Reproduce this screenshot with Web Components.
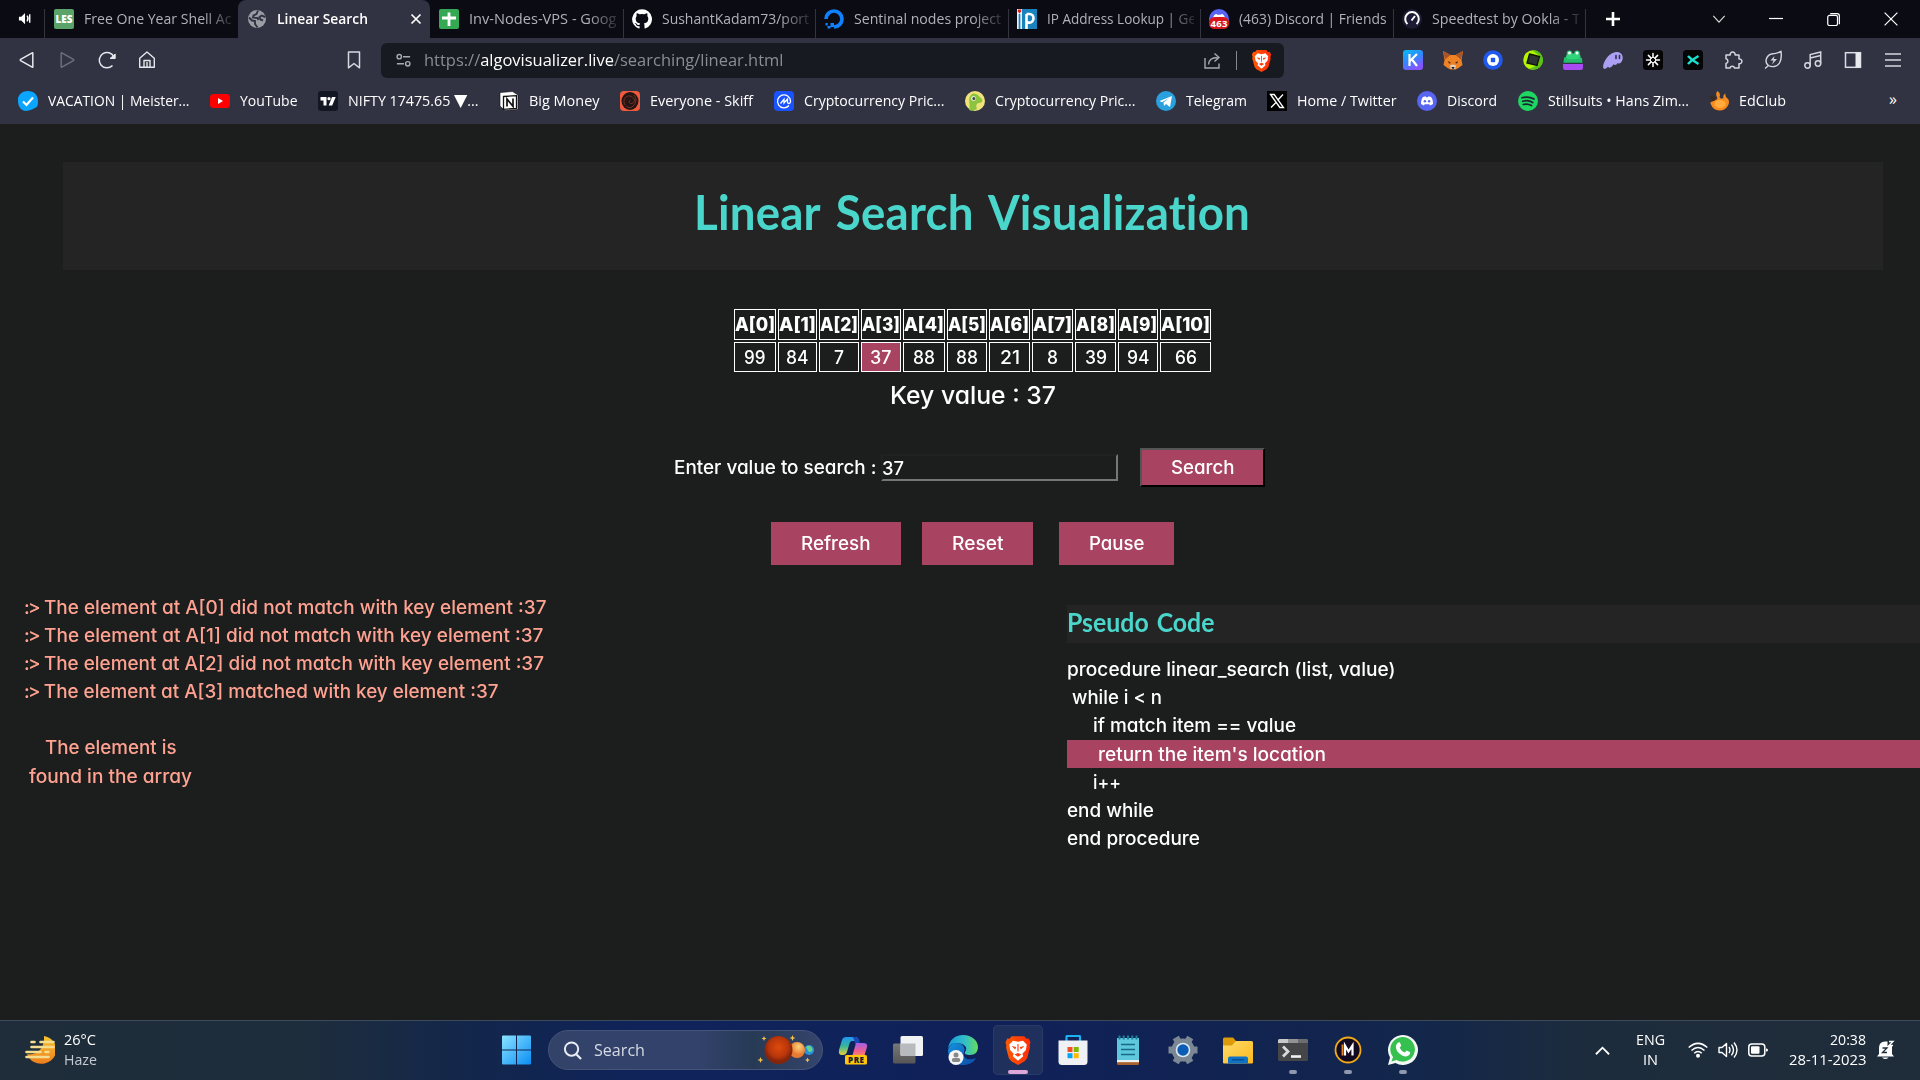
<!DOCTYPE html>
<html lang="en">
<head>
<meta charset="utf-8">
<title>Linear Search</title>
<style>
html,body{margin:0;padding:0;background:#1c1e1d;overflow:hidden}
body{font-family:"Open Sans","Noto Sans",sans-serif;width:1920px;height:1080px}
</style>
</head>
<body>
<desktop-screen></desktop-screen>
<script>
const ICONS = {
audio:[16,`<path d="M1 6h2.500l4-4v12l-4-4H1z" fill="#fff"/><path d="M9.700 5q2 3 0 6M12.500 3.500v9" fill="none" stroke="#fff" stroke-width="1.500"/>`],
les:[20,`<rect width="20" height="20" rx="2" fill="#5aa469"/><text x="10" y="13.800" font-family="Open Sans" font-weight="800" font-size="10" fill="#fff" text-anchor="middle" textLength="17" lengthAdjust="spacingAndGlyphs">LES</text>`],
globe:[20,`<circle cx="10" cy="10" r="9" fill="#9b9da5"/><path d="M11 1.500 9.500 5l-3 1.500-.5 2 4.500.5 1 2M18.500 8l-4-1.500-2 1.500 1 2.500 2.500 1M2 8.500l3 3 3 .5v3l2.500 3.500" fill="none" stroke="#313343" stroke-width="1.900"/>`],
sheets:[20,`<rect width="20" height="20" rx="2" fill="#34a853"/><path d="M10 3.500v13.500M3 9h14" stroke="#fff" stroke-width="2.800"/>`],
github:[20,`<path d="M10 .3a9.900 9.900 0 0 0-3.100 19.300c.5.1.7-.2.700-.5v-1.900c-2.800.6-3.400-1.200-3.400-1.200-.4-1.100-1.100-1.400-1.100-1.400-.9-.6.1-.6.1-.6 1 .1 1.500 1 1.500 1 .9 1.500 2.300 1.100 2.900.8.100-.6.300-1.100.6-1.300-2.200-.3-4.500-1.100-4.500-4.900 0-1.100.4-2 1-2.700-.1-.2-.4-1.200.1-2.600 0 0 .8-.3 2.700 1a9.500 9.500 0 0 1 5 0c1.900-1.300 2.700-1 2.700-1 .5 1.400.2 2.400.1 2.600.6.7 1 1.600 1 2.700 0 3.800-2.300 4.700-4.500 4.900.4.300.7.900.7 1.800v2.800c0 .3.200.6.700.5A9.900 9.900 0 0 0 10 .3z" fill="#fff"/>`],
docean:[20,`<path d="M10 18a8 8 0 1 0-8-8" fill="none" stroke="#0f80ff" stroke-width="3.700"/><path d="M6.500 14H10v4H6.500zM3.500 17h3v2.500h-3zM1.500 14h2.200v2.500H1.500z" fill="#0f80ff"/>`],
ip:[20,`<rect width="20" height="20" fill="#1a83bd"/><path d="M0 0h5v20H0z" fill="#e9f4fa"/><path d="M9.500 20V5M9.500 5h3a4 4.300 0 0 1 0 8.600h-3" fill="none" stroke="#fff" stroke-width="2.600"/><path d="M2.500 5v15" stroke="#1a83bd" stroke-width="1.700"/><path d="M.8.500h3.400v2L2.500 4.500.8 2.500z" fill="#d22"/>`],
dc463:[20,`<circle cx="10" cy="10" r="10" fill="#5865f2"/><path d="M4 9q1-4 3.500-4l1 .7h3l1-.7Q15 5 16 9z" fill="#fff"/><rect y="8" width="20" height="12" rx="5.500" fill="#d8171c"/><text x="10" y="17.500" font-family="Open Sans" font-weight="700" font-size="9.500" fill="#fff" text-anchor="middle" textLength="17">463</text>`],
speed:[20,`<circle cx="10" cy="10" r="10" fill="#1b1b33"/><path d="M5.500 15a6.800 6.800 0 1 1 9 0M9.500 11.500 13 7" fill="none" stroke="#fff" stroke-width="2"/>`],
close:[12,`<path d="M1.500 1.500l9 9m0-9-9 9" stroke="#fff" stroke-width="1.700"/>`],
plus:[16,`<path d="M8 1v14M1 8h14" stroke="#fff" stroke-width="2.600"/>`],
chev:[16,`<path d="M1.500 4.500 8 11.500l6.500-7" fill="none" stroke="#ddd" stroke-width="1.300"/>`],
min:[14,`<path d="M0 6.500h14" stroke="#fff" stroke-width="1.200"/>`],
max:[14,`<rect x=".8" y="2.500" width="10.500" height="11" rx="2" fill="none" stroke="#fff" stroke-width="1.300"/><path d="M3.500.7h7.500a2.300 2.300 0 0 1 2.300 2.300v9" fill="none" stroke="#fff" stroke-width="1.300"/>`],
winx:[14,`<path d="M.6.600l12.800 12.800m0-12.800L.6 13.400" stroke="#fff" stroke-width="1.200"/>`],
back:[20,`<path d="M15.800 3v14q0 .6-.6.200L3.600 10.600q-.7-.6 0-1.200L15.200 2.800q.6-.4.6.2z" fill="none" stroke="#e6e7ec" stroke-width="1.500"/>`],
fwd:[20,`<path d="M4.200 3v14q0 .6.6.200l11.600-6.600q.7-.6 0-1.200L4.800 2.800q-.6-.4-.6.2z" fill="none" stroke="#6b6d7b" stroke-width="1.500"/>`],
reload:[20,`<path d="M15.500 15.500A7.700 7.700 0 1 1 17 7" fill="none" stroke="#e6e7ec" stroke-width="1.500"/><path d="M13 8.500h5.200V4z" fill="#e6e7ec" stroke="#e6e7ec" stroke-linejoin="round"/>`],
home:[20,`<path d="M2.700 8.200 10 2l7.300 6.200v9.100H2.700zM7 17V10.500h6V17M10 12v5" fill="none" stroke="#e6e7ec" stroke-width="1.400" stroke-linejoin="round"/>`],
mark:[20,`<path d="M4.500 2h11v15.800L10 13.500l-5.500 4.300z" fill="none" stroke="#d7d8df" stroke-width="1.500" stroke-linejoin="round"/>`],
site:[18,`<circle cx="4.500" cy="5" r="2.300" fill="none" stroke="#a9abb3" stroke-width="1.500"/><circle cx="13.500" cy="12.500" r="2.300" fill="none" stroke="#a9abb3" stroke-width="1.500"/><path d="M8.500 5H16M2 12.500h7.500" stroke="#a9abb3" stroke-width="1.500"/>`],
share:[20,`<path d="M3 7v10h14v-4.500" fill="none" stroke="#a7a9b0" stroke-width="1.400"/><path d="M6.500 13.500q.5-7 9-7M12.500 2.500 17 6.500l-4.500 4" fill="none" stroke="#a7a9b0" stroke-width="1.400"/>`],
brave:[24,`<path d="M7 1h10l1.800 2 1.700-.2 1.500 3-.7 2.500.3 1.700-2.300 8.500-2 2.500L12 24l-5.300-3-2-2.500L2.400 10l.3-1.700L2 5.800l1.500-3 1.700.2z" fill="url(#bg)"/><defs><linearGradient id="bg"><stop stop-color="#ff5a00"/><stop offset="1" stop-color="#ff2b0a"/></linearGradient></defs><path d="M8 4.500 12 5.400l4-.9L19 7.500l-.7 4.500-2.800 3 .7 2L12 20.500 7.800 17l.7-2-2.800-3L5 7.500z" fill="#fff"/><path d="m6.800 8.800 3.700.7-.7 2zm10.400 0-3.700.7.7 2zM9.200 15.600 12 14.300l2.800 1.300L12 17.400z" fill="#ff3d05"/><path d="M12 7.200v6" stroke="#ff3d05" stroke-width=".9"/>`],
kep:[20,`<defs><linearGradient id="kg" x2=".5" y2="1"><stop stop-color="#05bdf2"/><stop offset=".5" stop-color="#2c8cff"/><stop offset="1" stop-color="#8554ff"/></linearGradient></defs><rect width="20" height="20" rx="3" fill="url(#kg)"/><path d="M6.500 4v12M14 4l-7 7M9 9.500l5 6.500" stroke="#fff" stroke-width="2.200" fill="none"/>`],
fox:[20,`<path d="M0 1 7.500 5h5L20 1l-1.500 9 1 5-4 3-3 1.500h-5L4.500 18l-4-3 1-5z" fill="#ee8225"/><path d="M0 1l7.500 4L2 9.500zM20 1l-7.500 4L18 9.500z" fill="#a85428"/><path d="M5 11l3 2-2 .5zM15 11l-3 2 2 .5z" fill="#222"/><path d="M7 15.500 10 14.500l3 1-.7 3.500H7.700z" fill="#ddd0bf"/><path d="M8.500 17h3l-.5 1.700H9z" fill="#222"/>`],
coinb:[20,`<circle cx="10" cy="10" r="9.800" fill="#2159ec"/><circle cx="10" cy="10" r="6" fill="#fff"/><rect x="7.800" y="7.800" width="4.400" height="4.400" rx=".6" fill="#2159ec"/>`],
lime:[20,`<circle cx="10" cy="10" r="9.800" fill="#b6f400"/><path d="M9 .3A9.800 9.800 0 0 1 17 17Q12 21 6 19l9-4 2-9z" fill="#58c11a"/><path d="M6.500 4 16.500 6.500 14 15.500 4 13z" fill="#2c3236" stroke="#0e1800" stroke-width="1.400"/>`],
frog:[20,`<circle cx="6.500" cy="3.300" r="2.800" fill="#28c76f"/><circle cx="14" cy="3.300" r="2.800" fill="#28c76f"/><rect x="3" y="3.500" width="14.500" height="7" rx="3.500" fill="#2fd57a"/><path d="M1 8q1-2 2.500 0t3 1h7q2 0 3-1t2.500 0l.5 4.800H.5z" fill="#25bd6c"/><circle cx="6.500" cy="2.900" r="1.500" fill="#fff"/><circle cx="14" cy="2.900" r="1.500" fill="#fff"/><path d="M0 14h20v3.500q0 2.500-2 2.500H2q-2 0-2-2.500z" fill="#a94af3"/>`],
ghost:[20,`<path d="M.3 18C-1 15 4 3.500 12 2.200c6-.9 8.500 3 7.500 7.300-.8 3.500-3.500 5-5 3.500-.5 2-3 2.500-4 1.300C8.500 18 5.500 18.500 5 16.500 3.500 19 1 19.500.300 18z" fill="#ab9ff2"/><path d="M13 5.500v3M16.500 5.500v3" stroke="#312c55" stroke-width="1.600" stroke-linecap="round"/>`],
flake:[20,`<rect width="20" height="20" rx="3.500" fill="#050505"/><path d="M10 3.500v3.800M10 12.700v3.800M3.500 10h3.800M12.700 10h3.800M5.400 5.400l2.700 2.700M11.900 11.900l2.700 2.700M14.600 5.400l-2.700 2.700M8.100 11.900l-2.700 2.700" stroke="#fff" stroke-width="1.500" stroke-linecap="round"/><circle cx="10" cy="10" r="2.700" fill="none" stroke="#fff" stroke-width=".9"/>`],
xk:[20,`<rect width="20" height="20" rx="3.500" fill="#050505"/><path d="M5 6q4 4.500 10.500 8M15.500 6Q9 9.500 5 14" fill="none" stroke="#19e3cf" stroke-width="2.500"/>`],
puzzle:[20,`<path d="M3 5h4.200a2.500 2.500 0 1 1 4.900 0H16v4a2.400 2.400 0 1 1 0 4.700V18h-4.500a2.300 2.300 0 0 0-4.500 0H3v-4.500a2.400 2.400 0 0 0 0-4.700z" fill="none" stroke="#d5d6dd" stroke-width="1.500" stroke-linejoin="round"/>`],
leaf:[20,`<path d="M18 1.500Q19 9 16.500 13c-2.500 4-7.500 4.500-11 2.500C.500 12 4 5 8.500 4q5-.5 9.500-2.500zM5.500 15.500 2 18.500" fill="none" stroke="#d5d6dd" stroke-width="1.400"/><path d="m11.500 6-4 4.500h3L9 14.500l5-5.500h-3.200z" fill="#d5d6dd"/>`],
music:[20,`<circle cx="4.500" cy="15.500" r="2.700" fill="none" stroke="#d5d6dd" stroke-width="1.500"/><circle cx="15" cy="13.500" r="2.700" fill="none" stroke="#d5d6dd" stroke-width="1.500"/><path d="M7.200 15.500V4.500L17.700 2v11.500M7.200 8 17.700 5.500" fill="none" stroke="#d5d6dd" stroke-width="1.500"/>`],
panel:[20,`<rect x="2.500" y="2.700" width="15" height="14.600" fill="none" stroke="#dcdde3" stroke-width="1.500"/><path d="M12.500 2.500h5v15h-5z" fill="#e9eaee"/>`],
menu:[20,`<path d="M2 4h16M2 10h16M2 16h16" stroke="#d5d6dd" stroke-width="1.600"/>`],
meister:[20,`<path d="M10 0C16 0 20 4 20 10s-1 6-5 8-9 3-12 0-3-7-3-10 3-8 10-8z" fill="#0aa5ff"/><path d="m5 10.500 3.500 3.500L15 6.500" fill="none" stroke="#fff" stroke-width="2.200"/>`],
youtube:[20,`<rect y="3" width="20" height="14" rx="3.500" fill="#f00"/><path d="m8 7 5 3-5 3z" fill="#fff"/>`],
tv:[20,`<rect width="20" height="20" rx="3" fill="#131722"/><path d="M2.500 6h6v8.500H5.500v-5h-3z" fill="#fff"/><circle cx="11" cy="7.700" r="1.600" fill="#fff"/><path d="M14 6h3.700l-3.500 8.500h-3.500z" fill="#fff"/>`],
notion:[20,`<path d="M1 1.500 13.500.500 19 4v14.500l-13.500 1L1 15z" fill="#fff" stroke="#111" stroke-width=".6"/><path d="M4.500 5.500 17.500 4.700v12.800l-13 .8z" fill="#fff" stroke="#111" stroke-width="1.300"/><path d="M8 15.500V8l6 7.300V7.500" fill="none" stroke="#111" stroke-width="1.700"/>`],
skiff:[20,`<rect width="20" height="20" rx="4" fill="#ef5a3c"/><ellipse cx="10" cy="10" rx="8.500" ry="9" fill="#241514"/><path d="M5 14C2 9 6 4 10 5s6 5 3 7-5-1-3-3M14 4q4 5 0 10t-8 1" fill="none" stroke="#7a3326" stroke-width=".9"/>`],
cmc:[20,`<rect width="20" height="20" rx="4" fill="#1a52ff"/><path d="M15 14.500A6.500 6.500 0 1 1 16.500 10q0 2.700-1.700 2.500T13.500 9.500V8L10 12V8.300L6.500 12.500" fill="none" stroke="#fff" stroke-width="1.300"/>`],
gecko:[20,`<circle cx="10" cy="10" r="10" fill="#f2e27c"/><path d="M4 19C6 14 2 8 6 4s8 1 10 3 2 5-2 5q-4 .5-2 6-5 3-8 1z" fill="#8bc53f"/><circle cx="8.500" cy="7.500" r="2.300" fill="#fff"/><circle cx="8.800" cy="7.500" r="1.500" fill="#444"/>`],
tg:[20,`<circle cx="10" cy="10" r="10" fill="#2aa1de"/><path d="m3.500 10 12.500-5-2 11-4-3-2 2-.5-3.500 5.500-4.500-7 4.200z" fill="#fff"/>`],
xx:[20,`<rect width="20" height="20" fill="#000"/><path d="M3.500 3.500h3.700l9.300 13h-3.700zM16 3.500l-5.500 6M9 11.500l-5 5" fill="none" stroke="#fff" stroke-width="1.300"/>`],
discord:[20,`<circle cx="10" cy="10" r="10" fill="#5865f2"/><path d="M4 13q0-5 2-7l2.500-.7.5 1h2l.5-1L14 6q2 2 2 7l-2.800 1.500-1-1.300H7.800l-1 1.300z" fill="#fff"/><circle cx="7.900" cy="10.300" r="1.200" fill="#5865f2"/><circle cx="12.100" cy="10.300" r="1.200" fill="#5865f2"/>`],
spotify:[20,`<circle cx="10" cy="10" r="10" fill="#1ed760"/><path d="M4 6.800q6.500-1.800 12 1.200M4.700 10.300q5.500-1.600 10 1.200M5.300 13.500q4.500-1.200 8.200 1" fill="none" stroke="#1b2230" stroke-width="1.700" stroke-linecap="round"/>`],
ed:[20,`<path d="M8.500 0q3.500 2 2 6 1 2.500 4 1-1-3 2-4.500-.5 3 1.500 4.500 3 2 1.500 6.500Q17 19.500 10.500 19.500T1.500 12.500Q1.500 9.500 5 9q5 0 2.500-4Q6.500 2 8.500 0z" fill="#f68b1f"/><path d="M0 5.500q4-1.500 5.500.5t.5 3.500L2 11Q3 8 0 5.500z" fill="#3b2a20"/><ellipse cx="11" cy="13" rx="5.500" ry="4" fill="#ffac3d"/>`],
haze:[30,`<defs><linearGradient id="hz" x2="0" y2="1"><stop stop-color="#f7c52d"/><stop offset="1" stop-color="#ee7d1e"/></linearGradient></defs><path d="M19 1a15 14 0 1 1-17 18c9 2 18-5 17-18z" fill="url(#hz)"/><path d="M6.500 7h3M15.500 7h13M6.500 12h22M1.500 17h14M20.500 17h3M1.500 22h22" stroke="#f4dd8e" stroke-width="2.600" stroke-linecap="round"/>`],
win:[30,`<defs><linearGradient id="wg" x2="1" y2="1"><stop stop-color="#8be3ff"/><stop offset="1" stop-color="#0a8ef4"/></linearGradient></defs><path d="M0 1.500Q0 .5 1 .5h13v14H0zM15 .5h13q1 0 1 1v13H15zM0 15.500h14v14H1q-1 0-1-1zM15 15.500h14v13q0 1-1 1H15z" fill="url(#wg)"/>`],
search:[20,`<circle cx="9" cy="8.500" r="7" fill="none" stroke="#e9ecf4" stroke-width="2.100"/><path d="m14 14 5 5" stroke="#e9ecf4" stroke-width="2.300"/>`],
planets:[60,`<defs><radialGradient id="pr" cx=".5" cy=".4"><stop stop-color="#dd4a0e"/><stop offset=".7" stop-color="#b8360a"/><stop offset="1" stop-color="#84240a"/></radialGradient><radialGradient id="po" cx=".6" cy=".3"><stop stop-color="#ffd27a"/><stop offset="1" stop-color="#e77a32"/></radialGradient></defs><circle cx="52" cy="30" r="5" fill="#2894d8"/><path d="M49 27q4-3 6 1t-3 4z" fill="#69d089"/><circle cx="40" cy="30" r="8" fill="url(#po)"/><circle cx="21.500" cy="30" r="14" fill="url(#pr)"/><path d="M7 16l.7 1.800 1.800.7-1.800.7L7 21l-.7-1.800-1.800-.7 1.800-.7zM35.500 15l.8 2.200 2.200.8-2.200.8-.8 2.200-.8-2.200-2.200-.8 2.200-.8zM3.500 37l.8 2.200 2.200.8-2.200.8-.8 2.200-.8-2.200-2.200-.8 2.200-.8zM50.500 37.500l.7 1.800 1.800.7-1.800.7-.7 1.800-.7-1.800-1.800-.7 1.800-.7z" fill="#f5c84c"/>`],
copilot:[30,`<defs><linearGradient id="c1" x2="0" y2="1"><stop stop-color="#2196f3"/><stop offset=".5" stop-color="#36b59b"/><stop offset="1" stop-color="#e6d13a"/></linearGradient><linearGradient id="c2" x2="0" y2="1"><stop stop-color="#a05ee8"/><stop offset=".6" stop-color="#f2608c"/><stop offset="1" stop-color="#f79552"/></linearGradient></defs><path d="M8 2h10q2 0 3 4H14q-2 0-3 4l-2 7q-1 3-4 3H4q-4 0-3-5L4 5q1-3 4-3z" fill="url(#c1)"/><path d="M14 2h4q2 0 3 3l1 4h-5q-1-7-3-7z" fill="#1747b8"/><path d="M18 8h7q5 0 4 4l-3 10H14z" fill="url(#c2)"/><rect x="7" y="20" width="22" height="9.500" rx="1.500" fill="#ffc60a"/><text x="18" y="27.500" font-family="Open Sans" font-weight="800" font-size="8" fill="#16202f" text-anchor="middle" textLength="16">PRE</text>`],
taskview:[30,`<defs><linearGradient id="tg1" x2="0" y2="1"><stop stop-color="#777"/><stop offset="1" stop-color="#565656"/></linearGradient></defs><rect x="0" y="8.500" width="22.500" height="20" rx="1.500" fill="url(#tg1)"/><rect x="7.500" y="1" width="22.500" height="20" rx="1.500" fill="#f1f2f4"/><path d="M7.500 8.500h15V21H9q-1.500 0-1.500-1.500z" fill="#b9babd"/>`],
edge:[30,`<defs><linearGradient id="e1"><stop stop-color="#159bdf"/><stop offset=".6" stop-color="#35c1c4"/><stop offset="1" stop-color="#66dc5a"/></linearGradient><linearGradient id="e2" x2="1" y2="1"><stop stop-color="#1592e0"/><stop offset="1" stop-color="#0b4aa5"/></linearGradient></defs><path d="M0 15Q1 9 8 8c7 0 10 5 8 9-2 7 5 9 12 6-3 6-9 7-13 7C7 30 0 24 0 15z" fill="url(#e2)"/><path d="M0 14C1 5 7 0 15 0c9 0 15 6 15 12 0 5-3 8-8 8-4 0-6-1-5-3 4-5-2-9-8-9C5 8 1 10 0 14z" fill="url(#e1)"/><circle cx="8" cy="22.500" r="7.500" fill="#f4f6f8"/><circle cx="8" cy="20" r="2.500" fill="#888"/><rect x="3.800" y="23" width="8.500" height="4" rx="2" fill="#888"/>`],
store:[30,`<path d="M8.500 6V2q0-1.200 1.200-1.200h11Q22 .8 22 2v4" fill="none" stroke="#1bb1f2" stroke-width="2.200"/><path d="M.5 5.500h29v21q0 3.500-3.500 3.500H4Q.5 30 .5 26.500z" fill="#f0f1f4"/><path d="M9.500 12h5v5h-5z" fill="#f25022"/><path d="M15.700 12h5v5h-5z" fill="#7fba00"/><path d="M9.500 18.200h5v5h-5z" fill="#00a4ef"/><path d="M15.700 18.200h5v5h-5z" fill="#ffb900"/>`],
notepad:[30,`<rect x="4" y="25" width="22" height="5" rx="1.500" fill="#a9612b"/><path d="M4 3h22v24H4z" fill="#5fc8dd"/><path d="M4 25h22v2.200H4z" fill="#eef2f4"/><path d="M8 9.500h14M8 14.500h14M8 19.500h14" stroke="#176a83" stroke-width="1.700"/><path d="M6.500.5v4M10.700.5v4M15 .5v4M19.300.5v4M23.500.5v4" stroke="#19819b" stroke-width="2"/>`],
gear:[30,`<g fill="#7b8894"><circle cx="15" cy="15" r="11.500"/><path d="M11.500.5h7v29h-7z" transform="rotate(30 15 15)"/><path d="M11.500.5h7v29h-7z" transform="rotate(90 15 15)"/><path d="M11.500.5h7v29h-7z" transform="rotate(150 15 15)"/></g><circle cx="15" cy="15" r="7.300" fill="#dce8f4"/><circle cx="15" cy="15" r="5.700" fill="#0b5cb4"/>`],
folder:[30,`<defs><linearGradient id="fg" x2="1" y2="1"><stop stop-color="#ffdb6b"/><stop offset="1" stop-color="#fbb91c"/></linearGradient></defs><path d="M0 4q0-1.500 1.500-1.500H10L13 6h6v6H0z" fill="#dd9b0c"/><path d="M0 10.500h9L13 6h15.500Q30 6 30 7.500v20q0 1-1 1H1q-1 0-1-1z" fill="url(#fg)"/><path d="M5 28.500v-5q0-2 2-2h16q2 0 2 2v5z" fill="#0f74c8"/><path d="M9 24.800h12" stroke="#0a4a86" stroke-width="1.300"/>`],
term:[30,`<rect y="4" width="30" height="22" rx="1.500" fill="#454648"/><path d="M1.500 4H10v4H0V5.500Q0 4 1.500 4z" fill="#c9c9ca"/><path d="M10 4h10v4H10z" fill="#929395"/><path d="M20 4h8.500Q30 4 30 5.500V8H20z" fill="#6c6d70"/><path d="m5 11.500 5 5-5 5" fill="none" stroke="#d9d9d9" stroke-width="2.800"/><path d="M13 21.500h10" stroke="#f2f2f2" stroke-width="2.600"/>`],
em:[30,`<circle cx="15" cy="15" r="12.500" fill="#120a20" stroke="#efaa18" stroke-width="1.800"/><path d="M9.500 20.500v-11" stroke="#e8852b" stroke-width="1.800"/><path d="M12 20.500V10.500l3.500 6 4-6v10" fill="none" stroke="#fff" stroke-width="2.200"/>`],
wa:[30,`<path d="M0 30l2-7.500A15 15 0 1 1 7.500 28z" fill="#f4f8f5"/><path d="M3.500 26.500 5 22A12.300 12.300 0 1 1 8.500 25z" fill="#35c04f"/><path d="M9.500 8q2-1.500 2.700 0l1 2.700-1.500 2q1.500 3.500 5 4.800l2-2 3 1.500q1 .5 0 2.300c-2.500 3.500-6.700 2-9.700-.3C8 16 6.500 11 9.500 8z" fill="#fff"/>`],
up:[16,`<path d="M1 12 8 5l7 7" fill="none" stroke="#fff" stroke-width="1.900"/>`],
wifi:[20,`<circle cx="10" cy="15.700" r="2" fill="#fff"/><path d="M.7 7.500q9.300-8.300 18.600 0M3.500 10.500q6.500-6 13 0M6.200 13.300q3.800-3.600 7.600 0" fill="none" stroke="#fff" stroke-width="1.500"/>`],
vol:[20,`<path d="M1 7.500h3L8.500 3.500v13L4 12.500H1z" fill="none" stroke="#fff" stroke-width="1.400" stroke-linejoin="round"/><path d="M11 7q2 3 0 6M13.500 4.700q4 5.300 0 10.600M16 2.500q6 7.500 0 15" fill="none" stroke="#fff" stroke-width="1.400"/>`],
bat:[20,`<rect x=".8" y="4" width="16" height="12" rx="3" fill="none" stroke="#fff" stroke-width="1.500"/><rect x="3" y="6.200" width="8.500" height="7.600" rx="1" fill="#fff"/><path d="M18 8.500q2-.3 2 1.500t-2 1.500z" fill="#fff"/>`],
bell:[20,`<path d="M3 8q0-6.500 6-6.500h2.500V6H16v8l2 2.500H1L3 14z" fill="#fff"/><path d="M6 17.500h6.500q-3 3-6.500 0z" fill="#fff"/><path d="M6.500 8h4.500l-4.500 4.500H11" fill="none" stroke="#1f2c3a" stroke-width="1.300"/><path d="M13 1.500h4L13 5.500h4" fill="none" stroke="#fff" stroke-width="1.400"/>`]
};

class UiIcon extends HTMLElement{
  connectedCallback(){
    const s=+this.getAttribute('size')||20,[v,body]=ICONS[this.getAttribute('name')];
    const r=this.shadowRoot||this.attachShadow({mode:'open'});
    r.innerHTML=`<style>:host{display:block;flex:none;width:${s}px;height:${s}px}svg{display:block}</style><svg width="${s}" height="${s}" viewBox="0 0 ${v} ${v}">${body}</svg>`;
  }
}
/* One line of text whose advance is scaled to the width given in "w". */
class FitText extends HTMLElement{
  connectedCallback(){
    const w=+this.getAttribute('w');
    const r=this.shadowRoot||this.attachShadow({mode:'open'});
    r.innerHTML=`<style>:host{display:block;flex:none;width:${w}px;white-space:pre}span{display:inline-block;transform-origin:0 50%}</style><span><slot></slot></span>`;
    const s=r.querySelector('span');
    const n=s.getBoundingClientRect().width;
    if(n>0)s.style.transform=`scaleX(${w/n})`;
  }
}
class BrowserTab extends HTMLElement{
  connectedCallback(){
    const on=this.hasAttribute('active'),fade=this.hasAttribute('fade');
    this.attachShadow({mode:'open'}).innerHTML=`<style>
    :host{display:flex;align-items:center;box-sizing:border-box;flex:none;width:192.500px;height:38px;padding:0 6px 0 9px;color:#b1b2b8;font-size:14px;line-height:36px;
      ${on?'background:#313343;border-radius:8px 8px 0 0;color:#fff;font-weight:600;':''}}
    .t{flex:1;min-width:0;margin-left:10px;white-space:nowrap;${fade?'-webkit-mask:linear-gradient(90deg,#000 80%,#0003)':''}}
    i{flex:none;width:1px;height:29px;margin:9px -7px 0 6px;background:${this.hasAttribute('line')?'#33343f':'transparent'}}
    ui-icon[name=close]{margin-right:2px}
    </style><ui-icon name="${this.getAttribute('icon')}"></ui-icon><div class="t"><slot></slot></div>${on?'<ui-icon name="close" size="12"></ui-icon>':'<i></i>'}`;
  }
}
class TabStrip extends HTMLElement{
  connectedCallback(){
    this.attachShadow({mode:'open'}).innerHTML=`<style>
    :host{display:flex;align-items:center;height:38px;background:#0b0b14}
    .a{width:45px;height:29px;margin-top:9px;border-right:1px solid #33343f;box-sizing:border-box;padding:2px 0 0 18px}
    .plus{margin-left:20px}.c1{margin-left:91px}.c2{margin-left:43px}.c3{margin-left:44px}.c4{margin-left:44px}
    </style><div class="a"><ui-icon name="audio" size="15"></ui-icon></div>
    <browser-tab icon="les" fade><fit-text w="147.500">Free One Year Shell Ac</fit-text></browser-tab>
    <browser-tab icon="globe" active><fit-text w="91">Linear Search</fit-text></browser-tab>
    <browser-tab icon="sheets" line fade><fit-text w="147.500">Inv-Nodes-VPS - Goog</fit-text></browser-tab>
    <browser-tab icon="github" line fade><fit-text w="147">SushantKadam73/port</fit-text></browser-tab>
    <browser-tab icon="docean" line fade><fit-text w="147">Sentinal nodes project</fit-text></browser-tab>
    <browser-tab icon="ip" line fade><fit-text w="149">IP Address Lookup | Ge</fit-text></browser-tab>
    <browser-tab icon="dc463" line><fit-text w="147.500">(463) Discord | Friends</fit-text></browser-tab>
    <browser-tab icon="speed" line fade><fit-text w="148">Speedtest by Ookla - T</fit-text></browser-tab>
    <ui-icon class="plus" name="plus" size="16"></ui-icon><ui-icon class="c1" name="chev" size="14"></ui-icon>
    <ui-icon class="c2" name="min" size="14"></ui-icon><ui-icon class="c3" name="max" size="13"></ui-icon><ui-icon class="c4" name="winx" size="14"></ui-icon>`;
  }
}
class NavBar extends HTMLElement{
  connectedCallback(){
    const ext=['kep','fox','coinb','lime','frog','ghost','flake','xk','puzzle','leaf','music','panel','menu'];
    this.attachShadow({mode:'open'}).innerHTML=`<style>
    :host{display:flex;align-items:center;height:44px;padding-left:17px;box-sizing:border-box}
    .nav{display:flex;gap:20px;width:327px}
    .url{display:flex;align-items:center;margin:1px 0 0 17px;width:903px;height:35px;border-radius:6px;background:#171a20;box-sizing:border-box;padding-left:14px;font-size:16.500px;line-height:22px;color:#8b8d93}
    fit-text{margin:-1px 0 0 12px}b{font-weight:400;color:#fff}
    .sh{margin-left:418px}.d{width:1px;height:19px;background:#85878e;margin:0 13px 0 14px}
    .ext{display:flex;gap:20px;margin-left:118.500px}
    </style><div class="nav"><ui-icon name="back"></ui-icon><ui-icon name="fwd"></ui-icon><ui-icon name="reload"></ui-icon><ui-icon name="home"></ui-icon></div>
    <ui-icon name="mark"></ui-icon>
    <div class="url"><ui-icon name="site" size="17"></ui-icon><fit-text w="359.500">https://<b>algovisualizer.live</b>/searching/linear.html</fit-text><ui-icon class="sh" name="share"></ui-icon><div class="d"></div><ui-icon name="brave" size="23"></ui-icon></div>
    <div class="ext">${ext.map(n=>`<ui-icon name="${n}"></ui-icon>`).join('')}</div>`;
  }
}
class BookmarkBar extends HTMLElement{
  connectedCallback(){
    const b=[['meister','VACATION | Meister...',141.5],['youtube','YouTube',57.5],['tv','NIFTY 17475.65 <b>▼</b>...',130.5],['notion','Big Money',70.5],['skiff','Everyone - Skiff',103],['cmc','Cryptocurrency Pric...',140.5],['gecko','Cryptocurrency Pric...',140.5],['tg','Telegram',61],['xx','Home / Twitter',99.500],['discord','Discord',50],['spotify','Stillsuits • Hans Zim...',141],['ed','EdClub',47]];
    this.attachShadow({mode:'open'}).innerHTML=`<style>
    :host{display:flex;align-items:center;gap:20.500px;height:38px;padding:0 23px 0 18px;box-sizing:border-box;font-size:14px;line-height:19px;color:#fff}
    div{display:flex;align-items:center;gap:10px}p{margin:0 0 3px auto;font-size:16px}
    fit-text{margin-top:-2px}
    b{font:17px/10px "DejaVu Sans",sans-serif}
    </style>${b.map(([i,t,w])=>`<div><ui-icon name="${i}"></ui-icon><fit-text w="${w}">${t}</fit-text></div>`).join('')}<p>»</p>`;
  }
}
class ArrayTable extends HTMLElement{
  connectedCallback(){
    const v=[[99,42,21.5],[84,39,22.5],[7,40,10],[37,40,21.5],[88,42,22],[88,40,22],[21,41,20],[8,41,11],[39,41,22],[94,40,22.5],[66,51,22]];
    this.attachShadow({mode:'open'}).innerHTML=`<style>
    :host{display:flex;gap:2px;width:max-content}
    .c{display:flex;flex-direction:column;gap:2px}
    .h,.v{display:flex;justify-content:center;box-sizing:border-box;border:1px solid #fff}
    .h{height:31px;line-height:29px;font-weight:800;font-size:18.500px}
    .v{height:30px;line-height:29px;font-weight:500;font-size:18px}
    .hit{background:#a84462}
    </style>${v.map(([n,w,t],i)=>`<div class="c" style="width:${w}px"><div class="h"><fit-text w="${w-2}">A[${i}]</fit-text></div><div class="v ${i==3?'hit':''}"><fit-text w="${t}">${n}</fit-text></div></div>`).join('')}`;
  }
}
class ActionButton extends HTMLElement{
  connectedCallback(){
    this.attachShadow({mode:'open'}).innerHTML=`<style>
    :host{display:flex;align-items:center;justify-content:center;flex:none;box-sizing:border-box;width:${this.getAttribute('width')}px;height:43px;background:#a84462;color:#fff;font-weight:500;line-height:1}
    :host([raised]){height:39px;border:2px solid;border-color:#555 #000 #000 #555}
    </style><slot></slot>`;
  }
}
class LogPanel extends HTMLElement{
  connectedCallback(){
    this.attachShadow({mode:'open'}).innerHTML=`<style>
    :host{display:block;flex:none;width:1067px;padding:2px 0 0 24px;box-sizing:border-box;color:#ffa291;line-height:28px;height:240px}
    .r{padding:28px 0 0 20.500px}.s{padding:1px 0 0 5px}
    b{font-weight:500;letter-spacing:-1.700px}
    </style>
    <fit-text w="522.500"><b>:&gt;</b> The element at A[0] did not match with key element :37</fit-text>
    <fit-text w="519.500"><b>:&gt;</b> The element at A[1] did not match with key element :37</fit-text>
    <fit-text w="520"><b>:&gt;</b> The element at A[2] did not match with key element :37</fit-text>
    <fit-text w="474.500"><b>:&gt;</b> The element at A[3] matched with key element :37</fit-text>
    <div class="r"><fit-text w="131.500">The element is</fit-text></div><div class="s"><fit-text w="163">found in the array</fit-text></div>`;
  }
}
class PseudoCode extends HTMLElement{
  connectedCallback(){
    const l=[['procedure linear_search (list, value)',0,328.5],['while i < n',5,90],['if match item == value',26,203],["return the item's location",31,228],['i++',26,28],['end while',0,87],['end procedure',0,133]];
    this.attachShadow({mode:'open'}).innerHTML=`<style>
    :host{display:block;flex:1;color:#fff;line-height:28px}
    h2{margin:0 0 12px;height:38px;background:#242424;color:#4bd6cc;font-family:Lato,sans-serif;font-size:26px;font-weight:700;line-height:34px;word-spacing:2px}
    .on{background:#a84462}.l{height:28px}.g{height:28.400px}
    </style><h2><fit-text w="147.500">Pseudo Code</fit-text></h2>${l.map(([t,x,w],i)=>`<div class="l ${i==3?'on':''} ${i==1||i==2?'g':''}" style="padding-left:${x}px"><fit-text w="${w}">${t.replace('<','&lt;')}</fit-text></div>`).join('')}`;
  }
}
class AlgoPage extends HTMLElement{
  connectedCallback(){
    this.attachShadow({mode:'open'}).innerHTML=`<style>
    :host{display:flex;flex-direction:column;align-items:stretch;height:896px;padding-top:38px;box-sizing:border-box;background:#1c1e1d;color:#fff;font-family:Inter,sans-serif;font-feature-settings:"cv11";font-size:18.500px;font-weight:500}
    header{height:108px;margin:0 37.500px 0 62.500px;background:#242424;display:flex;padding-left:631px}
    header fit-text{color:#4bd6cc;font-family:Lato,sans-serif;font-feature-settings:"liga" 0,"clig" 0,"dlig" 0;font-variant-ligatures:none;letter-spacing:.2px;font-size:48.500px;font-weight:700;line-height:98px;height:97px;word-spacing:5px}
    array-table{margin:39px 0 0 734px}
    .key{margin:7px 0 0 889.500px;font-size:24.500px;line-height:32px;font-weight:500}
    .form{display:flex;align-items:center;height:39px;margin:37px 0 0 674px}
    .in{display:flex;align-items:center;box-sizing:border-box;width:237px;height:27px;margin:0 22px 0 4.500px;border:2px solid;border-color:#202221 #767676 #767676 #202221;line-height:22px}
    .in fit-text{margin:0 0 0 -1px}.lb{margin-top:-1px}
    .btns{display:flex;margin:35px 0 0 771px}.btns>*:nth-child(2){margin:0 26px 0 21px}
    .low{display:flex;margin-top:24px}
    .low pseudo-code{margin-top:16px}.low log-panel{margin-top:2px}
    </style>
    <header><fit-text w="556">Linear Search Visualization</fit-text></header>
    <array-table></array-table>
    <fit-text class="key" w="166">Key value : 37</fit-text>
    <div class="form"><fit-text class="lb" w="202.500">Enter value to search :</fit-text><div class="in"><fit-text w="22">37</fit-text></div><action-button raised width="125"><fit-text w="63.500">Search</fit-text></action-button></div>
    <div class="btns"><action-button width="130"><fit-text w="69.500">Refresh</fit-text></action-button><action-button width="111"><fit-text w="51.500">Reset</fit-text></action-button><action-button width="115"><fit-text w="55.500">Pause</fit-text></action-button></div>
    <div class="low"><log-panel></log-panel><pseudo-code></pseudo-code></div>`;
  }
}
class TaskApp extends HTMLElement{
  connectedCallback(){
    const s=this.getAttribute('state')||'';
    this.attachShadow({mode:'open'}).innerHTML=`<style>
    :host{display:flex;flex-direction:column;align-items:center;box-sizing:border-box;flex:none;width:50px;height:50px;padding-top:10px;border-radius:5px}
    :host([state=active]){background:#20305c;box-shadow:inset 0 0 0 1px #2b3b67}
    i{margin-top:5px;height:4px;border-radius:2px;width:${s=='active'?20:8}px;background:${s=='active'?'#dda6d9':s?'#9098ae':'transparent'}}
    </style><ui-icon name="${this.getAttribute('icon')}" size="30"></ui-icon><i></i>`;
  }
}
class TaskBar extends HTMLElement{
  connectedCallback(){
    this.attachShadow({mode:'open'}).innerHTML=`<style>
    :host{display:flex;align-items:center;height:60px;box-sizing:border-box;border-top:1px solid #3d4a5b;padding-bottom:1px;color:#fff;font-size:14px;line-height:20px;
      background:linear-gradient(90deg,#1f2d3a 0,#1e2d3c 300px,#12264c 480px,#10235a 640px,#10215a 1000px,#112350 1230px,#13264b 1420px,#1d2c3c 1590px,#1f2c3a 100%)}
    .w{display:flex;align-items:center;gap:9px;padding-left:25px;width:492px;box-sizing:border-box}.w span{color:#c5cad0}
    .w>div,.col{margin-top:-1px}
    .q{display:flex;align-items:center;box-sizing:border-box;width:275px;height:40px;margin:0 5px 0 6px;padding-left:14px;border:1px solid #46547a;border-radius:20px;background:linear-gradient(90deg,#334269,#32426b 55%,#273a55 75%,#35446c);color:#d6dae5;font-size:17px}
    .q fit-text{margin-left:12px}.q ui-icon[name=planets]{margin:0 0 0 112px}
    .apps{display:flex;gap:5px}
    .tray{display:flex;align-items:center;margin-left:auto;padding-right:24px}
    .col{display:flex;flex-direction:column;align-items:center}.end{align-items:flex-end}
    .g{display:flex;gap:10px;margin:0 21px 0 23px}
    </style>
    <div class="w"><ui-icon name="haze" size="30"></ui-icon><div><fit-text w="32">26°C</fit-text><span><fit-text w="33">Haze</fit-text></span></div></div>
    <task-app icon="win"></task-app>
    <div class="q"><ui-icon name="search" size="19"></ui-icon><fit-text w="51">Search</fit-text><ui-icon name="planets" size="60"></ui-icon></div>
    <div class="apps"><task-app icon="copilot"></task-app><task-app icon="taskview"></task-app><task-app icon="edge"></task-app><task-app icon="brave" state="active"></task-app><task-app icon="store"></task-app><task-app icon="notepad"></task-app><task-app icon="gear"></task-app><task-app icon="folder"></task-app><task-app icon="term" state="open"></task-app><task-app icon="em" state="open"></task-app><task-app icon="wa" state="open"></task-app></div>
    <div class="tray"><ui-icon name="up" size="15" style="margin-right:26px"></ui-icon><div class="col"><fit-text w="29">ENG</fit-text><fit-text w="15">IN</fit-text></div>
    <div class="g"><ui-icon name="wifi"></ui-icon><ui-icon name="vol"></ui-icon><ui-icon name="bat"></ui-icon></div>
    <div class="col end"><fit-text w="36">20:38</fit-text><fit-text w="77.500">28-11-2023</fit-text></div><ui-icon name="bell" style="margin-left:10px"></ui-icon></div>`;
  }
}
class DesktopScreen extends HTMLElement{
  connectedCallback(){
    this.attachShadow({mode:'open'}).innerHTML=`<style>
    :host{display:flex;flex-direction:column;width:1920px;height:1080px;overflow:hidden}
    .chrome{background:#313343;height:124px}
    </style><div class="chrome"><tab-strip></tab-strip><nav-bar></nav-bar><bookmark-bar></bookmark-bar></div><algo-page></algo-page><task-bar></task-bar>`;
  }
}
[['ui-icon',UiIcon],['fit-text',FitText],['browser-tab',BrowserTab],['tab-strip',TabStrip],['nav-bar',NavBar],['bookmark-bar',BookmarkBar],['array-table',ArrayTable],['action-button',ActionButton],['log-panel',LogPanel],['pseudo-code',PseudoCode],['algo-page',AlgoPage],['task-app',TaskApp],['task-bar',TaskBar],['desktop-screen',DesktopScreen]].forEach(([n,c])=>customElements.define(n,c));
</script>
</body>
</html>
